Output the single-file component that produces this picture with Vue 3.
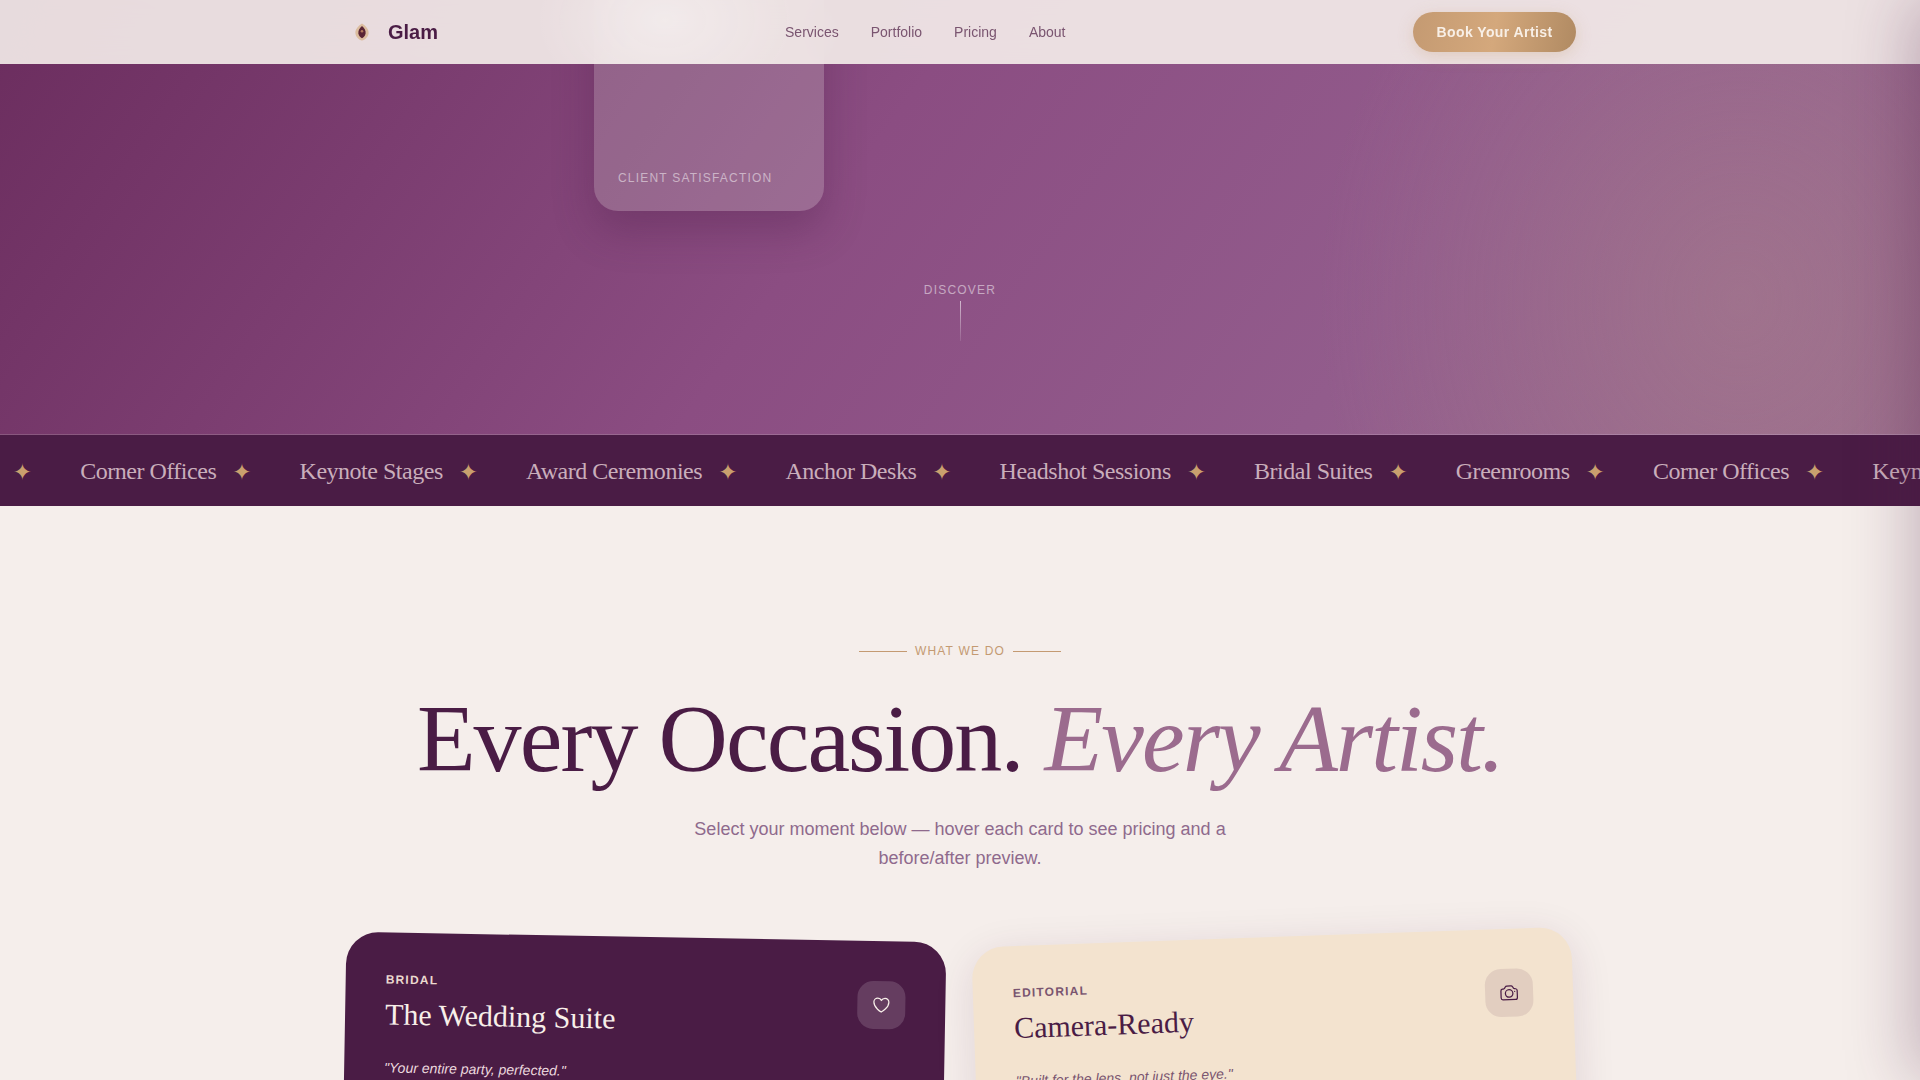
<template>
  <div class="page">
    <header class="nav">
      <div class="nav-inner">
        <a class="brand">
          <svg class="brand-mark" width="20" height="20" viewBox="0 0 20 20">
            <path d="M10 1.5C14 4 17 7.5 16.6 11.2C16.2 15 13 17.8 10 18.6C7 17.8 3.8 15 3.4 11.2C3 7.5 6 4 10 1.5Z" fill="#dcbd9f" />
            <path d="M10 4C12.6 6.4 14 8.8 13.6 11.4C13.2 13.8 11.5 15.4 10 16.2C8.5 15.4 6.8 13.8 6.4 11.4C6 8.8 7.4 6.4 10 4Z" fill="#5a2434" />
            <circle cx="10" cy="9.2" r="1.3" fill="#b4795c" />
          </svg>
          <span>Glam</span>
        </a>
        <nav class="links">
          <a v-for="l in links" :key="l">{{ l }}</a>
        </nav>
        <button class="cta">Book Your Artist</button>
      </div>
    </header>

    <section class="hero">
      <div class="stat-card">
        <span>CLIENT SATISFACTION</span>
      </div>
      <div class="discover">
        <span>DISCOVER</span>
        <i></i>
      </div>
    </section>

    <div class="marquee">
      <div class="track">
        <div class="item" v-for="(m, i) in places" :key="i">
          <span>{{ m }}</span><b>✦</b>
        </div>
      </div>
    </div>

    <section class="services">
      <div class="eyebrow"><i></i><span>WHAT WE DO</span><i></i></div>
      <h1>Every Occasion. <em>Every Artist.</em></h1>
      <p class="lead">Select your moment below — hover each card to see pricing and a before/after preview.</p>

      <div class="cards">
        <article class="card dark">
          <div class="card-head">
            <div>
              <div class="tag">BRIDAL</div>
              <h3>The Wedding Suite</h3>
            </div>
            <div class="icon">
              <svg width="20" height="20" viewBox="0 0 24 24" fill="none" stroke="currentColor" stroke-width="1.5" stroke-linecap="round" stroke-linejoin="round">
                <path d="M21 8.25c0-2.485-2.099-4.5-4.688-4.5-1.935 0-3.597 1.126-4.312 2.733-.715-1.607-2.377-2.733-4.313-2.733C5.1 3.75 3 5.765 3 8.25c0 7.22 9 12 9 12s9-4.78 9-12z" />
              </svg>
            </div>
          </div>
          <p class="quote">"Your entire party, perfected."</p>
        </article>
        <article class="card cream">
          <div class="card-head">
            <div>
              <div class="tag">EDITORIAL</div>
              <h3>Camera-Ready</h3>
            </div>
            <div class="icon">
              <svg width="20" height="20" viewBox="0 0 24 24" fill="none" stroke="currentColor" stroke-width="1.5" stroke-linecap="round" stroke-linejoin="round">
                <path d="M6.827 6.175A2.31 2.31 0 015.186 7.23c-.38.054-.757.112-1.134.175C2.999 7.58 2.25 8.507 2.25 9.574V18a2.25 2.25 0 002.25 2.25h15A2.25 2.25 0 0021.75 18V9.574c0-1.067-.75-1.994-1.802-2.169a47.865 47.865 0 00-1.134-.175 2.31 2.31 0 01-1.64-1.055l-.822-1.316a2.192 2.192 0 00-1.736-1.039 48.774 48.774 0 00-5.232 0 2.192 2.192 0 00-1.736 1.039l-.821 1.316z" />
                <path d="M16.5 12.75a4.5 4.5 0 11-9 0 4.5 4.5 0 019 0zM18.75 10.5h.008v.008h-.008V10.5z" />
              </svg>
            </div>
          </div>
          <p class="quote">"Built for the lens, not just the eye."</p>
        </article>
      </div>
    </section>

    <div class="drawer"></div>
  </div>
</template>

<script setup>
const links = ['Services', 'Portfolio', 'Pricing', 'About']
const places = [
  'Greenrooms', 'Corner Offices', 'Keynote Stages', 'Award Ceremonies', 'Anchor Desks',
  'Headshot Sessions', 'Bridal Suites', 'Greenrooms', 'Corner Offices', 'Keynote Stages'
]
</script>

<style>
html, body { margin: 0; background: #f5eeeb; }
</style>

<style scoped>
.page {
  position: relative;
  height: 1080px;
  overflow: hidden;
  font-family: "Liberation Sans", Arial, sans-serif;
  background: #f5eeeb;
}
.nav {
  position: absolute; top: 0; left: 0; right: 0;
  z-index: 10;
  height: 64px;
  background:
    radial-gradient(ellipse 130px 90px at 665px 20px, rgba(255, 255, 255, 0.32), transparent),
    rgba(245, 238, 235, 0.9);
  backdrop-filter: blur(20px);
}
.nav-inner {
  width: 1232px; height: 64px; margin: 0 auto;
  display: flex; align-items: center; position: relative;
}
.brand {
  display: flex; align-items: center; gap: 16px;
  font-size: 20px; font-weight: 700; color: #4a1c45;
}
.brand-mark { margin-left: 8px; }
.links {
  display: flex; gap: 32px;
  margin-left: 347px;
  font-size: 14px; color: #7a5570;
}
.cta {
  margin-left: auto;
  width: 163px; height: 40px;
  border: none; border-radius: 20px;
  font: 700 14px "Liberation Sans", Arial, sans-serif;
  letter-spacing: 0.42px;
  color: #f8efe6;
  background: linear-gradient(100deg, #c49a72 0%, #d4a87c 50%, #b08a62 100%);
  box-shadow: 0 4px 16px rgba(196, 154, 114, 0.3);
}
.hero {
  position: relative;
  height: 434px;
  background:
    radial-gradient(ellipse 420px 480px at 1740px 300px, rgba(170, 130, 140, 0.45), transparent 100%),
    linear-gradient(125deg, #6b2d5e 0%, #8b4d82 44%, #925c8c 72%, #9a6c8e 100%);
  border-bottom: 1px solid rgba(255, 255, 255, 0.2);
}
.stat-card {
  position: absolute; left: 594px; top: -30px;
  width: 230px; height: 241px;
  box-sizing: border-box;
  padding: 0 24px 26px;
  display: flex; align-items: flex-end;
  border-radius: 24px;
  background: rgba(225, 235, 220, 0.2);
  box-shadow: 0 20px 40px rgba(74, 28, 69, 0.3);
  font-size: 12px; letter-spacing: 1.2px;
  color: rgba(255, 255, 255, 0.5);
}
.discover {
  position: absolute; left: 0; right: 0; top: 283px;
  display: flex; flex-direction: column; align-items: center; gap: 4px;
  font-size: 12px; letter-spacing: 1.2px;
  color: rgba(255, 255, 255, 0.5);
}
.discover i {
  width: 1px; height: 40px;
  background: linear-gradient(rgba(255, 255, 255, 0.6), rgba(255, 255, 255, 0.1));
}
.marquee {
  height: 71px;
  background: #4a1c45;
  overflow: hidden;
  display: flex; align-items: center;
}
.track {
  display: flex;
  transform: translate(-117px, 1px);
  white-space: nowrap;
}
.item {
  display: flex; align-items: center; gap: 16px;
  margin-right: 48px;
  font: 24px "Liberation Serif", "Times New Roman", serif;
  letter-spacing: -0.48px;
  color: #c9aebb;
}
.item b {
  font: 400 23px "DejaVu Sans", sans-serif;
  letter-spacing: 0;
  color: #c9a06e;
}
.services { padding-top: 138px; }
.eyebrow {
  display: flex; justify-content: center; align-items: center; gap: 8px;
  font-size: 12px; letter-spacing: 1.2px; color: #c49a72;
}
.eyebrow i { width: 48px; height: 1px; background: #c49a72; }
h1 {
  margin: 28px 0 0;
  text-align: center;
  font: 400 96px/1.1 "Liberation Serif", "Times New Roman", serif;
  letter-spacing: -1.92px;
  color: #4a1c45;
}
h1 em { color: #9b6b8e; }
.lead {
  width: 576px; margin: 23px auto 0;
  text-align: center;
  font-size: 18px; line-height: 29px;
  color: #8f6a8d;
}
.cards {
  width: 1232px; margin: 64px auto 0;
  display: grid; grid-template-columns: 1fr 1fr; gap: 32px;
}
.card {
  box-sizing: border-box;
  height: 285px;
  padding: 40px;
  border-radius: 32px;
}
.card.dark {
  background: #4a1c45; color: #f8efe9;
  transform: rotate(1deg);
}
.card.cream {
  background: #f3e3cf; color: #4a1c45;
  transform: rotate(-2deg);
  box-shadow: 0 8px 40px rgba(74, 28, 69, 0.12);
}
.card-head { display: flex; justify-content: space-between; align-items: flex-start; }
.tag { font-size: 12px; font-weight: 700; letter-spacing: 1.2px; }
.dark .tag { color: #ecd9cf; }
.cream .tag { color: #7a5570; }
h3 {
  margin: 10px 0 0;
  font: 400 30px/36px "Liberation Serif", "Times New Roman", serif;
}
.icon {
  width: 48px; height: 48px; border-radius: 16px;
  display: flex; align-items: center; justify-content: center;
}
.dark .icon { background: rgba(255, 255, 255, 0.15); }
.cream .icon { background: rgba(74, 28, 69, 0.1); }
.quote { margin: 27px 0 0; font-size: 14px; font-style: italic; }
.dark .quote { color: #ecd9df; }
.cream .quote { color: #7a5570; }
.drawer {
  position: absolute; left: 100%; top: 0;
  width: 400px; height: 1080px;
  z-index: 20;
  box-shadow: -10px 0 60px rgba(74, 28, 69, 0.28);
}
</style>
